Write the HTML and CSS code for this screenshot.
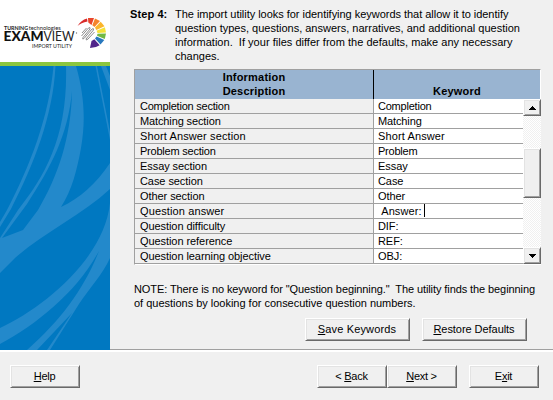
FILE: index.html
```html
<!DOCTYPE html>
<html lang="en">
<head>
<meta charset="utf-8">
<title>ExamView Import Utility</title>
<link rel="stylesheet" href="styles.css">
</head>
<body>
<div class="window">
  <div class="main">
    <aside class="sidebar">
      <svg class="logo" viewBox="0 0 110 62">
        <g font-family="Lato, sans-serif" fill="#222">
          <text x="4" y="30" font-size="5.4" font-weight="700" textLength="24" lengthAdjust="spacingAndGlyphs">TURNING</text>
          <text x="28.7" y="30" font-size="5.6" textLength="32" lengthAdjust="spacingAndGlyphs">technologies</text>
          <text x="3.5" y="40.8" font-size="13.8" font-weight="900" fill="#111" textLength="40" lengthAdjust="spacingAndGlyphs">EXAM</text>
          <text x="43.5" y="40.8" font-size="13.8" textLength="31" lengthAdjust="spacingAndGlyphs">VIEW</text>
          <text x="32" y="47.7" font-size="6.2" textLength="40" lengthAdjust="spacingAndGlyphs">IMPORT UTILITY</text>
        </g>
        <circle cx="76.5" cy="33" r=".7" fill="#777"/>
        <path fill="#d92b2b" d="M77.5 26 Q81 20 87 18.5 L87.5 21.5 Q81 22.500 77.500 26Z"/>
        <path fill="#e9452b" d="M88 18 L94 18 L91.500 25 L88.300 22.500Z"/>
        <path fill="#f5832a" d="M95 18.400 L100 21 L94.500 27 L92.300 25.300Z"/>
        <path fill="#fbb52c" d="M100.700 21.800 L104.500 26.300 L96.300 30 L95 27.500Z"/>
        <path fill="#f4e238" d="M104.900 27.200 L106 32.500 L97.500 33 L96.600 30.700Z"/>
        <path fill="#72b944" d="M106 33.500 L104.800 39 L97 35.800 L97.500 33.700Z"/>
        <path fill="#2878bd" d="M104.300 40 L100.500 44.600 L95 38.500 L96.600 36.500Z"/>
        <path fill="#51268b" d="M99.700 45.200 Q95.500 48 90 48 L91.500 41 L94.300 39.200Z"/>
        <path d="M81.500 36 L88.500 28 Q90.500 26.500 90 29 L83 37.500 Q82 40 84 38.500 L92 29 Q94 27.800 93.500 30 L86 39 Q86 41 88 39 L94.500 32 M82 33 L86.500 28" fill="none" stroke="#8c8c8c" stroke-width="1"/>
      </svg>
      <svg class="art" viewBox="0 66 110 284">
        <g fill="#2389cb">
          <path d="M53.500 66H55.500C53 116 34 164 11 209L0 227V222L7 210C30 166 49 117 53.500 66Z"/>
          <path d="M66 66H76C84 94 86 119 81 148C77 170 72 190 61 207C80 198 96 184 110 163V189C82 215 43 233 15 258L0 273V238L18 210C46 175 68 135 66 66Z"/>
          <path d="M95.500 66H97L110 132V140Z"/>
          <path d="M101 66H106L110 76V90Z"/>
          <path d="M110 203V258C103 274 88 290 79 304L50 350H47L72 313L37 350H27C61 320 84 289 99 251C76 293 37 324 0 344V328C43 308 104 259 110 203Z"/>
        </g>
        <path fill="#0078c1" d="M72 91C68 135 51 167 27 204L2 238L23 230L38 210C58 176 71 138 72 91Z"/>
      </svg>
    </aside>
    <main class="content">
      <section class="intro">
        <b class="step">Step 4:</b>
        <p class="lines"><span class="i1">The import utility looks for identifying keywords that allow it to identify</span><span class="i2">question types, questions, answers, narratives, and additional question</span><span class="i3">information.&nbsp; If your files differ from the defaults, make any necessary</span><span class="i4">changes.</span></p>
      </section>
      <div class="grid">
        <div class="head"><div class="desc">Information<br>Description</div><div class="key">Keyword</div></div>
        <div class="body">
          <div class="rows">
            <div class="row tighter"><span>Completion section</span><span>Completion</span></div>
            <div class="row tight"><span>Matching section</span><span>Matching</span></div>
            <div class="row loose"><span>Short Answer section</span><span>Short Answer</span></div>
            <div class="row tighter"><span>Problem section</span><span>Problem</span></div>
            <div class="row"><span>Essay section</span><span>Essay</span></div>
            <div class="row"><span>Case section</span><span>Case</span></div>
            <div class="row"><span>Other section</span><span>Other</span></div>
            <div class="row loose"><span>Question answer</span><span>&nbsp;Answer:<i class="caret"></i></span></div>
            <div class="row"><span>Question difficulty</span><span>DIF:</span></div>
            <div class="row"><span>Question reference</span><span>REF:</span></div>
            <div class="row"><span>Question learning objective</span><span>OBJ:</span></div>
          </div>
          <div class="scroll">
            <div class="raised arrow"><svg width="7" height="4" viewBox="0 0 7 4" shape-rendering="crispEdges"><path d="M3 0h1v1h1v1h1v1h1v1H0V3h1V2h1V1h1z"/></svg></div>
            <div class="raised thumb"></div>
            <div class="raised arrow down"><svg width="7" height="4" viewBox="0 0 7 4" shape-rendering="crispEdges"><path d="M0 0h7v1H6v1H5v1H4v1H3V3H2V2H1V1H0z"/></svg></div>
          </div>
        </div>
      </div>
      <p class="lines note"><span class="n1">NOTE: There is no keyword for "Question beginning."&nbsp; The utility finds the beginning</span><span class="n2">of questions by looking for consecutive question numbers.</span></p>
      <div class="actions"><button class="raised save"><u>S</u>ave Keywords</button><button class="raised restore"><u>R</u>estore Defaults</button></div>
    </main>
  </div>
  <footer class="footer">
    <button class="raised help"><u>H</u>elp</button>
    <button class="raised">&lt; <u>B</u>ack</button>
    <button class="raised"><u>N</u>ext &gt;</button>
    <button class="raised exit">E<u>x</u>it</button>
  </footer>
</div>
</body>
</html>
```
FILE: styles.css
```css
* { box-sizing: border-box; }
body { margin: 0; background: #f0f0f0; color: #000; font: 11px/14px "Liberation Sans", Arial, sans-serif; overflow: hidden; }
p { margin: 0; }
.window { width: 553px; height: 400px; display: flex; flex-direction: column; }
.main { display: flex; height: 350px; }
.sidebar { width: 110px; flex: none; background: #0078c1; }
.logo { display: block; width: 110px; height: 62px; background: #fff; }
.art { display: block; width: 110px; height: 288px; border-top: 4px solid #8cc63f; }
.content { flex: 1; min-width: 0; border-bottom: 1px solid #a0a0a0; padding: 7px 0 0 20px; }
.intro { display: flex; height: 62px; }
.step { width: 45px; letter-spacing: .1px; }
.lines { display: flex; flex-direction: column; white-space: nowrap; }
.i1 { letter-spacing: -.03px; }
.i2, .i4 { letter-spacing: 0; }
.i3 { letter-spacing: .02px; }
.n1 { letter-spacing: -.09px; }
.n2 { letter-spacing: -.015px; }
.grid { margin-left: 4px; width: 407px; height: 196px; border: 1px solid #a0a0a0; border-right-color: #fff; border-bottom-color: #fff; }
.head { display: flex; height: 29px; background: #99b4d1; font-weight: 700; text-align: center; letter-spacing: .2px; }
.desc { width: 239px; border-right: 1px solid #000; }
.key { flex: 1; padding-top: 14px; }
.body { display: flex; margin-right: -1px; }
.rows { width: 388px; flex: none; }
.row { display: flex; height: 15px; line-height: 15px; border-bottom: 1px solid #a0a0a0; white-space: pre; letter-spacing: -.07px; }
.row.tight { letter-spacing: -.12px; }
.row.tighter { letter-spacing: -.22px; }
.row.loose { letter-spacing: .12px; }
.row span:first-child { width: 239px; border-right: 1px solid #a0a0a0; padding-left: 5px; }
.row span:last-child { flex: 1; background: #fff; padding-left: 4px; }
.caret { display: inline-block; width: 1px; height: 13px; margin-left: 2px; background: #000; vertical-align: top; }
.scroll { width: 18px; height: 165px; background: repeating-conic-gradient(#fff 0 25%, #f0f0f0 0 50%) 0 0 / 2px 2px; display: flex; flex-direction: column; }
.raised { background: #f0f0f0; border: 1px solid; border-color: #fff #696969 #696969 #fff; box-shadow: inset 1px 1px #e3e3e3, inset -1px -1px #a0a0a0; }
.arrow { height: 17px; display: flex; align-items: center; justify-content: center; }
.thumb { height: 50px; margin-top: 32px; }
.down { margin-top: auto; }
.note { margin: 17px 0 0 4px; }
.actions { display: flex; gap: 12px; margin: 8px 0 0 175px; }
button { height: 23px; width: 70px; padding: 0 1px 2px 0; font: inherit; color: inherit; letter-spacing: -.25px; white-space: pre; }
.actions button { width: 105px; }
.save { letter-spacing: .15px; }
.restore { letter-spacing: -.05px; }
u { text-underline-offset: 1px; text-decoration-thickness: 1px; }
.footer { height: 50px; border-top: 2px solid #fff; padding: 13px 14px 0 10px; display: flex; }
.help { margin-right: 237px; }
.exit { margin-left: 12px; }
```
